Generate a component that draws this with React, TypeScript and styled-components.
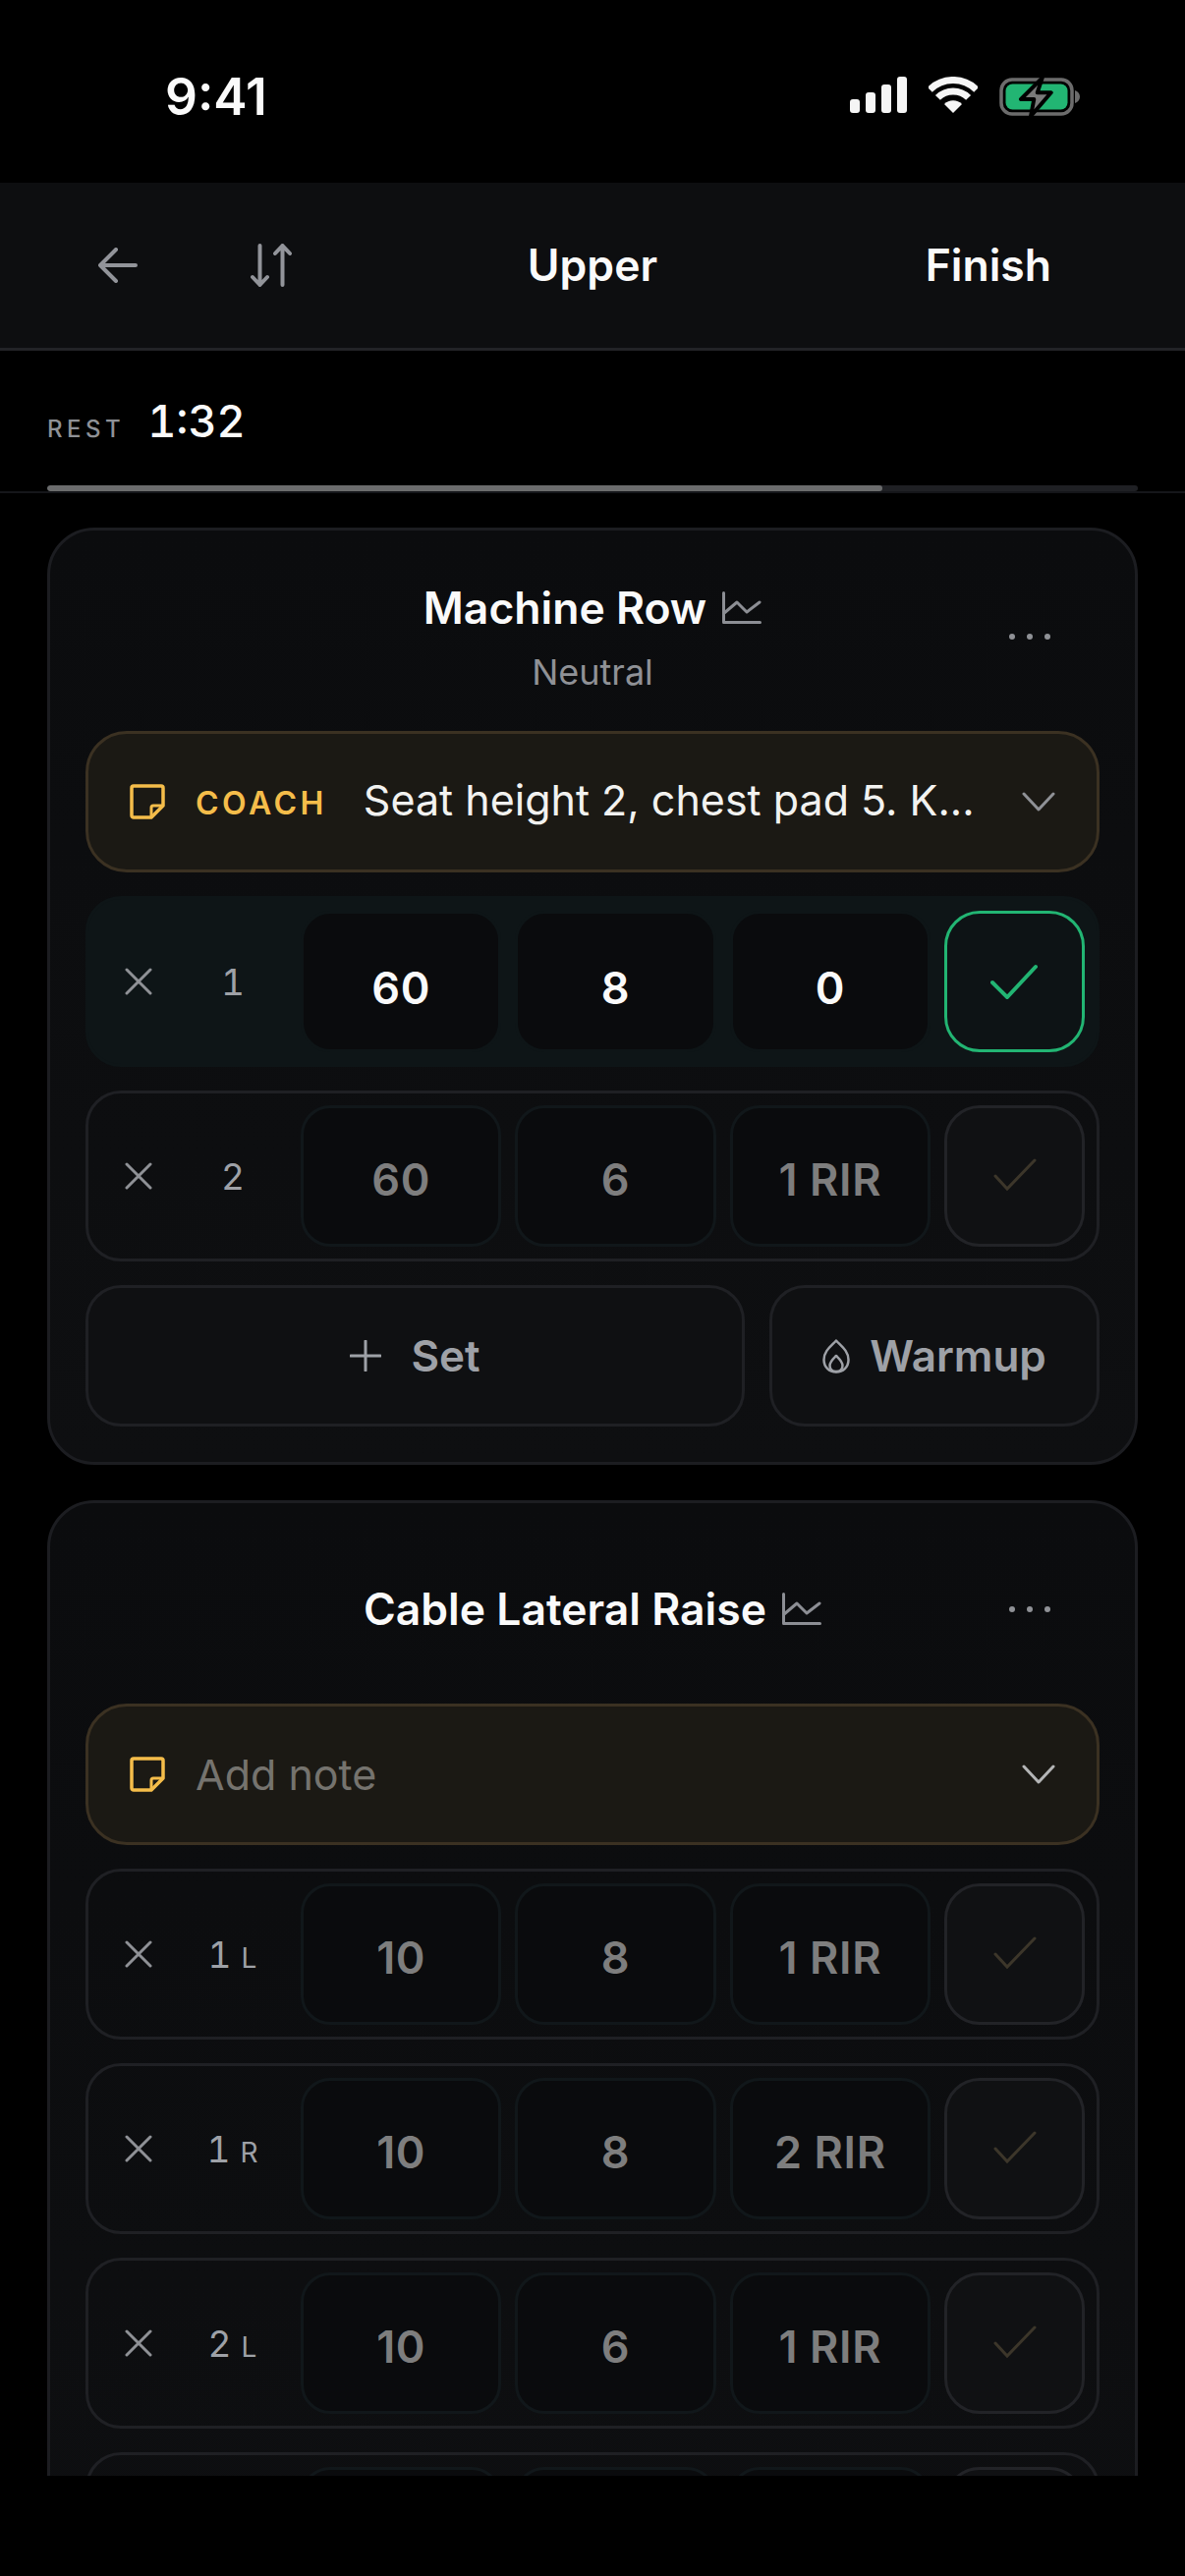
import React from 'react';
import styled, {createGlobalStyle} from 'styled-components';

const GlobalStyle = createGlobalStyle`
  html, body {
    margin: 0;
    padding: 0;
    background: #000;
  }
  * {
    box-sizing: border-box;
  }
`

type SetData = {
    num: string
    side?: string
    weight: string
    reps: string
    rir: string
    active?: boolean
}

const machineRowSets: SetData[] = [
    {num: '1', weight: '60', reps: '8', rir: '0', active: true},
    {num: '2', weight: '60', reps: '6', rir: '1 RIR'},
]

// the last row runs under the bottom edge, only its top border and boxes show
const lateralRaiseSets: SetData[] = [
    {num: '1', side: 'L', weight: '10', reps: '8', rir: '1 RIR'},
    {num: '1', side: 'R', weight: '10', reps: '8', rir: '2 RIR'},
    {num: '2', side: 'L', weight: '10', reps: '6', rir: '1 RIR'},
    {num: '', weight: '', reps: '', rir: ''},
]

function SignalIcon() {
    return (
        <svg width="58" height="37" viewBox="0 0 58 37" fill="#f5f5f5">
            <rect x="0" y="23" width="10" height="14" rx="3"/>
            <rect x="16" y="16" width="10" height="21" rx="3"/>
            <rect x="32" y="8" width="10" height="29" rx="3"/>
            <rect x="48" y="0" width="10" height="37" rx="3"/>
        </svg>
    )
}

function WifiIcon() {
    return (
        <svg width="50" height="37" viewBox="0 0 50 37" fill="none" stroke="#f5f5f5" strokeWidth="7">
            <path d="M1.3 13.3A33.5 33.5 0 0 1 48.7 13.3"/>
            <path d="M9.4 21.4A22 22 0 0 1 40.6 21.4"/>
            <path d="M25 37L16 28A12.7 12.7 0 0 1 34 28Z" fill="#f5f5f5" stroke="none"/>
        </svg>
    )
}

function BatteryIcon() {
    return (
        <svg width="82" height="41" viewBox="0 0 82 41" fill="none">
            <rect x="2" y="3" width="72" height="35" rx="11" stroke="#6c6c6c" strokeWidth="3.5"/>
            <rect x="6.5" y="7.5" width="63" height="26" rx="7" fill="#22b573"/>
            <path d="M77 14C80 15 82 17.5 82 20.5C82 23.5 80 26 77 27Z" fill="#6c6c6c"/>
            <path d="M43.7 1.3L22 23H35.3L32 40.3L52.7 16.3H38.7Z" fill="#7a7a7a" stroke="#000" strokeWidth="4" strokeLinejoin="round"/>
        </svg>
    )
}

function BackIcon() {
    return (
        <svg width="40" height="36" viewBox="0 0 40 36" fill="none" stroke="#92949a" strokeWidth="4" strokeLinecap="round" strokeLinejoin="round">
            <path d="M38 18H2M18 2L2 18L18 34"/>
        </svg>
    )
}

function SortIcon() {
    return (
        <svg width="42" height="44" viewBox="0 0 42 44" fill="none" stroke="#92949a" strokeWidth="4" strokeLinecap="round" strokeLinejoin="round">
            <path d="M9.5 2V42M2 34L9.5 42L17 34"/>
            <path d="M32.5 42V2M25 10L32.5 2L40 10"/>
        </svg>
    )
}

function ChartIcon() {
    return (
        <svg width="40" height="34" viewBox="0 0 40 34" fill="none" stroke="#8c8e94" strokeWidth="3" strokeLinecap="round" strokeLinejoin="round">
            <path d="M1.5 1.5V31.5H38.5"/>
            <path d="M2 22L15 11L25 21L38 11"/>
        </svg>
    )
}

function NoteIcon() {
    return (
        <svg width="36" height="36" viewBox="0 0 36 36" fill="none" stroke="#f5bd4a" strokeWidth="3.5" strokeLinejoin="round">
            <path d="M4 2H32A2 2 0 0 1 34 4V22L22 34H4A2 2 0 0 1 2 32V4A2 2 0 0 1 4 2Z"/>
            <path d="M34 22H24A2 2 0 0 0 22 24V34" strokeWidth="3"/>
        </svg>
    )
}

function ChevronIcon({color}: {color: string}) {
    return (
        <svg width="34" height="20" viewBox="0 0 34 20" fill="none" stroke={color} strokeWidth="3" strokeLinecap="round" strokeLinejoin="round">
            <path d="M2 2L17 18L32 2"/>
        </svg>
    )
}

function CloseIcon() {
    return (
        <svg width="28" height="28" viewBox="0 0 28 28" fill="none" stroke="#8f9196" strokeWidth="3" strokeLinecap="round">
            <path d="M2 2L26 26M26 2L2 26"/>
        </svg>
    )
}

function CheckIcon({active}: {active?: boolean}) {
    return (
        <svg width="48" height="36" viewBox="0 0 48 36" fill="none"
             stroke={active ? '#22b573' : '#3c362a'} strokeWidth={active ? 4 : 3} strokeLinecap="round">
            <path d={active ? 'M2 19L17 34L46 3' : 'M5 18L17 31L45 2'}/>
        </svg>
    )
}

function PlusIcon() {
    return (
        <svg width="32" height="32" viewBox="0 0 32 32" fill="none" stroke="#9ea1a7" strokeWidth="3" strokeLinecap="round">
            <path d="M16 1V31M1 16H31"/>
        </svg>
    )
}

function FlameIcon() {
    return (
        <svg width="28" height="35" viewBox="0 0 28 35" fill="none" stroke="#9ea1a7" strokeWidth="2.5" strokeLinejoin="round">
            <path d="M14 1.5C9 7 1.5 12 1.5 21C1.5 28.5 7 33.5 14 33.5C21 33.5 26.5 28.5 26.5 21C26.5 12 19 7 14 1.5Z"/>
            <path d="M14 17C11 20 7.5 23 7.5 27C7.5 30.5 10 33 14 33C18 33 20.5 30.5 20.5 27C20.5 23 17 20 14 17Z"/>
        </svg>
    )
}

function SetRow({set}: {set: SetData}) {
    return (
        <SetRowStyled $active={set.active}>
            <SetLead>
                <CloseIcon/>
                <SetNumber>
                    {set.num}
                    {set.side && <SetSide>{set.side}</SetSide>}
                </SetNumber>
            </SetLead>
            <SetValue $active={set.active}>{set.weight}</SetValue>
            <SetValue $active={set.active}>{set.reps}</SetValue>
            <SetValue $active={set.active}>{set.rir}</SetValue>
            <SetCheck $active={set.active}>
                <CheckIcon active={set.active}/>
            </SetCheck>
        </SetRowStyled>
    )
}

function ExerciseHeader({title, subtitle}: {title: string, subtitle?: string}) {
    return (
        <CardHeader>
            <TitleLine>
                <CardTitle>{title}</CardTitle>
                <ChartIcon/>
            </TitleLine>
            {subtitle && <CardSubtitle>{subtitle}</CardSubtitle>}
            <MoreButton>
                <MoreDot/><MoreDot/><MoreDot/>
            </MoreButton>
        </CardHeader>
    )
}

export default function App() {
    return (
        <AppStyled>
            <GlobalStyle/>
            <StatusBar>
                <StatusTime>9:41</StatusTime>
                <StatusIcons>
                    <SignalIcon/>
                    <WifiIcon/>
                    <BatteryIcon/>
                </StatusIcons>
            </StatusBar>

            <TopBar>
                <TopBarLeft>
                    <BackIcon/>
                    <SortIcon/>
                </TopBarLeft>
                <TopBarTitle>Upper</TopBarTitle>
                <TopBarRight>
                    <TopBarTitle>Finish</TopBarTitle>
                </TopBarRight>
            </TopBar>

            <RestSection>
                <RestLine>
                    <RestLabel>REST</RestLabel>
                    <RestTime>1:32</RestTime>
                </RestLine>
                <ProgressTrack>
                    <ProgressFill style={{width: `${(850 / 1110) * 100}%`}}/>
                </ProgressTrack>
            </RestSection>

            <Scroller>
                <Card>
                    <ExerciseHeader title="Machine Row" subtitle="Neutral"/>
                    <NoteBar>
                        <NoteIcon/>
                        <NoteTag>COACH</NoteTag>
                        <NoteText>Seat height 2, chest pad 5. K...</NoteText>
                        <ChevronIcon color="#8f9196"/>
                    </NoteBar>
                    {machineRowSets.map((set) => <SetRow key={set.num} set={set}/>)}
                    <ActionRow>
                        <SetButton><PlusIcon/>Set</SetButton>
                        <WarmupButton><FlameIcon/>Warmup</WarmupButton>
                    </ActionRow>
                </Card>

                <Card>
                    <ExerciseHeader title="Cable Lateral Raise"/>
                    <NoteBar>
                        <NoteIcon/>
                        <NotePlaceholder>Add note</NotePlaceholder>
                        <ChevronIcon color="#b4b5b6"/>
                    </NoteBar>
                    {lateralRaiseSets.map((set, i) => <SetRow key={i} set={set}/>)}
                </Card>
            </Scroller>

            <BottomSpace/>
        </AppStyled>
    );
}

const AppStyled = styled.div`
  display: flex;
  flex-direction: column;
  width: 1206px;
  height: 2622px;
  overflow: hidden;
  background: #000;
  color: #fff;
  font-family: Inter, 'Liberation Sans', sans-serif;
`

const StatusBar = styled.div`
  display: flex;
  flex: none;
  align-items: flex-start;
  justify-content: space-between;
  height: 186px;
  padding: 68px 107px 0 168px;
`

const StatusTime = styled.div`
  font-size: 51.5px;
  line-height: 60px;
  font-weight: 600;
  color: #fafafa;
`

const StatusIcons = styled.div`
  display: flex;
  align-items: flex-start;
  gap: 22px;
  padding-top: 10px;
`

const TopBar = styled.header`
  display: grid;
  flex: none;
  grid-template-columns: 1fr auto 1fr;
  align-items: center;
  height: 171px;
  background: #0d0e10;
  border-bottom: 3px solid #222327;
`

const TopBarLeft = styled.div`
  display: flex;
  align-items: center;
  gap: 115px;
  padding-left: 100px;
`

const TopBarRight = styled.div`
  display: flex;
  justify-content: flex-end;
  padding-right: 136px;
`

const TopBarTitle = styled.div`
  font-size: 44.5px;
  font-weight: 600;
  line-height: 56px;
  color: #fafafa;
`

const RestSection = styled.section`
  flex: none;
  height: 145px;
  padding: 0 48px;
  border-bottom: 2px solid #15161a;
`

const RestLine = styled.div`
  display: flex;
  align-items: baseline;
  gap: 23px;
  height: 137px;
  padding-top: 44px;
`

const RestLabel = styled.span`
  font-size: 24px;
  font-weight: 500;
  letter-spacing: 4.5px;
  color: #8f9196;
`

const RestTime = styled.span`
  font-size: 45px;
  font-weight: 500;
  font-variant-numeric: tabular-nums;
  color: #fafafa;
`

const ProgressTrack = styled.div`
  height: 6px;
  border-radius: 3px;
  background: #1f2024;
  overflow: hidden;
`

const ProgressFill = styled.div`
  height: 100%;
  border-radius: 3px;
  background: #6b6c6d;
`

const Scroller = styled.main`
  display: flex;
  flex: 1;
  flex-direction: column;
  gap: 36px;
  min-height: 0;
  overflow: hidden;
  padding: 35px 48px 0;
`

const BottomSpace = styled.div`
  flex: none;
  height: 102px;
  background: #000;
`

const Card = styled.section`
  display: flex;
  flex: none;
  flex-direction: column;
  gap: 24px;
  padding: 36px;
  border: 3px solid #1c1d21;
  border-radius: 48px;
  background: linear-gradient(180deg, #0b0c0e 0, #0e0f11 100%);
`

const CardHeader = styled.div`
  position: relative;
  display: flex;
  flex-direction: column;
  align-items: center;
  justify-content: center;
  gap: 15px;
  min-height: 144px;
`

const TitleLine = styled.div`
  display: flex;
  align-items: center;
  gap: 16px;
`

const CardTitle = styled.h2`
  margin: 0;
  font-size: 44.5px;
  font-weight: 600;
  line-height: 56px;
  color: #fafafa;
`

const CardSubtitle = styled.div`
  font-size: 36px;
  line-height: 44px;
  color: #8f9196;
`

const MoreButton = styled.div`
  position: absolute;
  top: 50%;
  right: 50px;
  display: flex;
  gap: 12px;
  transform: translateY(-50%);
`

const MoreDot = styled.span`
  width: 6px;
  height: 6px;
  border-radius: 50%;
  background: #8f9196;
`

const NoteBar = styled.div`
  display: flex;
  align-items: center;
  height: 144px;
  padding: 0 42px 0 42px;
  border: 3px solid #3b3122;
  border-radius: 42px;
  background: #1b1914;
`

const NoteTag = styled.span`
  margin: 2px 0 0 31px;
  font-size: 32px;
  font-weight: 600;
  letter-spacing: 3.5px;
  color: #f5bd4a;
`

const NoteText = styled.span`
  flex: 1;
  margin: 0 0 5px 37px;
  font-size: 43px;
  white-space: nowrap;
  color: #f2f2f0;
`

const NotePlaceholder = styled.span`
  flex: 1;
  margin-left: 31px;
  font-size: 43px;
  color: #75736e;
`

const SetRowStyled = styled.div<{$active?: boolean}>`
  display: flex;
  align-items: center;
  gap: 14px;
  height: 174px;
  padding: 0 12px;
  border: 3px solid ${({$active}) => ($active ? '#0e1517' : '#1f2024')};
  border-radius: 36px;
  background: ${({$active}) => ($active ? '#0e1517' : 'transparent')};
`

const SetLead = styled.div`
  display: grid;
  flex: none;
  grid-template-columns: 78px 1fr;
  align-items: center;
  justify-items: center;
  width: 190px;
`

const SetNumber = styled.div`
  display: flex;
  align-items: baseline;
  justify-content: center;
  gap: 10px;
  padding-left: 2px;
  font-size: 37px;
  font-variant-numeric: tabular-nums;
  color: #9ea1a7;
`

const SetSide = styled.span`
  font-size: 28px;
  letter-spacing: 1px;
`

const SetValue = styled.div<{$active?: boolean}>`
  display: flex;
  flex: 1;
  align-items: center;
  justify-content: center;
  height: 144px;
  padding-top: ${({$active}) => ($active ? '12px' : '6px')};
  border: 3px solid ${({$active}) => ($active ? '#0e1517' : '#11171a')};
  border-radius: 30px;
  background: #0a0b0d;
  font-size: 45px;
  font-weight: 600;
  letter-spacing: 0.6px;
  color: ${({$active}) => ($active ? '#fafafa' : '#7e7e7e')};
`

const SetCheck = styled.div<{$active?: boolean}>`
  display: flex;
  flex: none;
  align-items: center;
  justify-content: center;
  width: 143px;
  height: 144px;
  border: 3px solid ${({$active}) => ($active ? '#22b573' : '#222327')};
  border-radius: 36px;
  background: ${({$active}) => ($active ? '#0d1315' : '#101113')};
`

const ActionRow = styled.div`
  display: flex;
  gap: 25px;
`

const ActionButton = styled.button`
  display: flex;
  align-items: center;
  justify-content: center;
  height: 144px;
  border: 3px solid #1f2024;
  border-radius: 36px;
  background: #0f1012;
  font-family: inherit;
  font-size: 44px;
  font-weight: 600;
  color: #9ea1a7;
`

const SetButton = styled(ActionButton)`
  flex: 1;
  gap: 30px;
`

const WarmupButton = styled(ActionButton)`
  flex: none;
  gap: 20px;
  width: 336px;
  padding: 0;
`
